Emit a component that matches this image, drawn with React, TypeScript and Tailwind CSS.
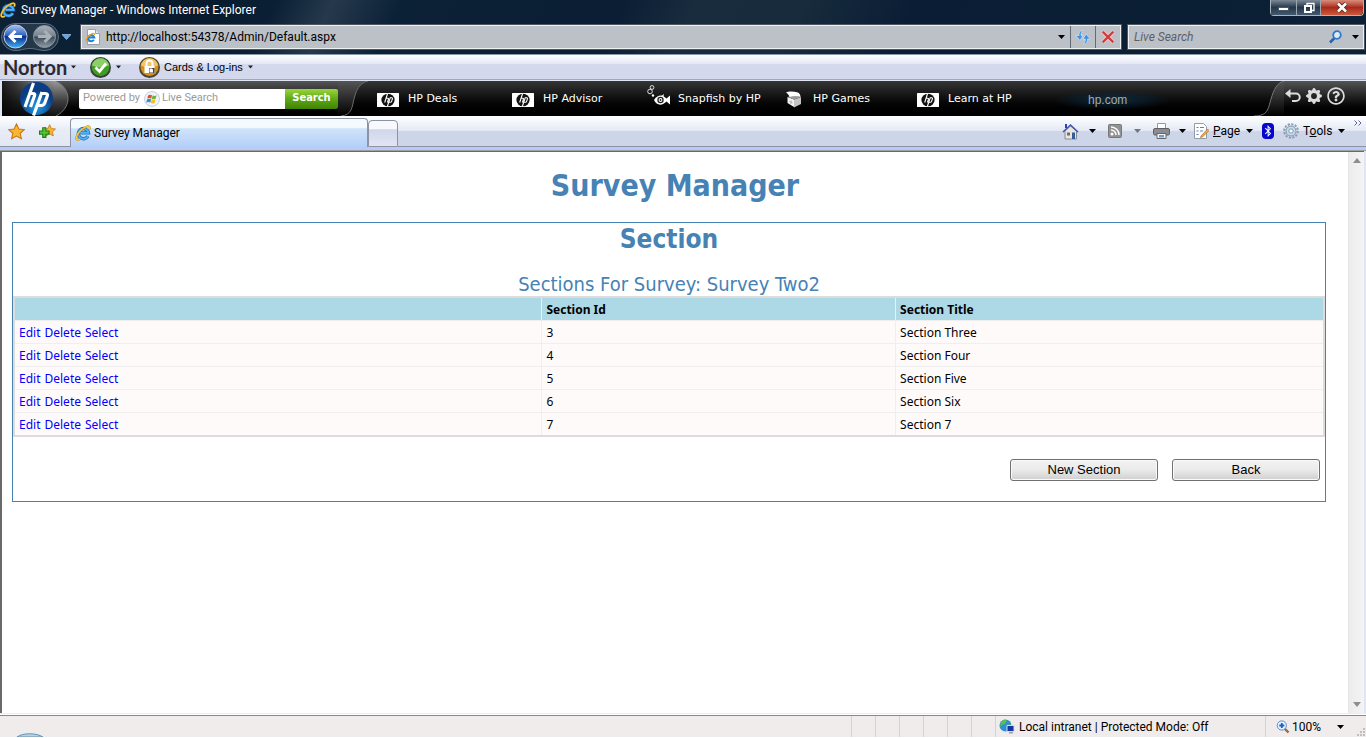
import React from 'react'
import { FaBluetoothB, FaRegQuestionCircle } from 'react-icons/fa'
import { BsGearFill } from 'react-icons/bs'

const ui = "font-['Roboto','Open_Sans',sans-serif]"

function Caret({ className = 'text-black' }: { className?: string }) {
  return (
    <svg className={`shrink-0 ${className}`} width="7" height="4" viewBox="0 0 7 4" aria-hidden="true">
      <path d="M0 0h7L3.5 4z" fill="currentColor" />
    </svg>
  )
}

function IeLogo({ size = 16 }: { size?: number }) {
  return (
    <svg className="shrink-0" width={size} height={size} viewBox="0 0 16 16" aria-hidden="true">
      <path d="M12.9 11.2a5.1 5.1 0 1 1 .6-3.3H5.4" fill="none" stroke="#1c6cc4" strokeWidth="3.4" />
      <path d="M12.9 11.2a5.1 5.1 0 1 1 .6-3.3H5.4" fill="none" stroke="#4fb5f2" strokeWidth="1.8" />
      <path d="M14.2 4.6C15.6 1.6 13.9 .5 11 1.8 6.5 3.7 2.3 8.6 1.3 12.3 .8 14.7 2.2 15.6 5 14.2" fill="none" stroke="#c98a12" strokeWidth="2" />
      <path d="M14.2 4.6C15.6 1.6 13.9 .5 11 1.8 6.5 3.7 2.3 8.6 1.3 12.3 .8 14.7 2.2 15.6 5 14.2" fill="none" stroke="#fbd04a" strokeWidth="1.2" />
    </svg>
  )
}

function PageIe() {
  return (
    <svg className="shrink-0" width="16" height="16" viewBox="0 0 16 16" aria-hidden="true">
      <path d="M2.5 .5h8l4 4v11h-12z" fill="#fdfdfd" stroke="#9aa0a8" />
      <path d="M10.5 .5v4h4" fill="#dfe5ee" stroke="#9aa0a8" />
      <path d="M8.9 10.8a3.1 3.1 0 1 1 .4-2.2H3.500" fill="none" stroke="#1f7fd8" strokeWidth="2" />
      <path d="M9.5 6C10 4 8 4 5.5 5.8 2.5 8 .7 10.7 1 12c.3 1 1.5 .8 2.8 .1" fill="none" stroke="#e9a51e" strokeWidth="1.2" />
    </svg>
  )
}

function NavButtons() {
  return (
    <svg className="shrink-0" width="60" height="30" viewBox="0 0 60 30" role="img" aria-label="Back and forward">
      <defs>
        <linearGradient id="nb" x2="0" y2="1">
          <stop offset="0" stopColor="#a9c2ee" /><stop offset=".45" stopColor="#2f62c0" />
          <stop offset=".5" stopColor="#0b2f8c" /><stop offset="1" stopColor="#3fb4f4" />
        </linearGradient>
        <linearGradient id="nf" x2="0" y2="1">
          <stop offset="0" stopColor="#aab3bd" /><stop offset=".48" stopColor="#77818d" />
          <stop offset=".52" stopColor="#3d4955" /><stop offset="1" stopColor="#8f9ca8" />
        </linearGradient>
      </defs>
      <path d="M15 1.5h30a13.500 13.500 0 0 1 0 27c-6 0-9-2-15-2s-9 2-15 2a13.500 13.500 0 0 1 0-27z" fill="#24384a" stroke="#5d6f80" />
      <circle cx="15.5" cy="14.5" r="11.5" fill="url(#nb)" stroke="#b9cdf0" />
      <path d="M22 14.5H11M15.5 9l-5.5 5.5 5.5 5.5" fill="none" stroke="#fff" strokeWidth="3" />
      <circle cx="44.5" cy="14.5" r="11" fill="url(#nf)" stroke="#8c98a4" />
      <path d="M38 14.5h11M44.5 9l5.5 5.5-5.5 5.5" fill="none" stroke="#a9b1b9" strokeWidth="3" />
    </svg>
  )
}

function WindowControls() {
  return (
    <div className="mr-[2px] flex h-4 rounded-b border border-t-0 border-[#aab4be]">
      <button type="button" aria-label="Minimize" className="flex w-[26px] items-center justify-center border-r border-[#9aa6b2] bg-linear-to-b from-[#7d8995] via-[#25384a] via-50% to-[#435a70]">
        <svg width="13" height="8" viewBox="0 0 13 8"><path d="M1.5 3.5h10v3h-10z" fill="#fff" stroke="#4a5866" /></svg>
      </button>
      <button type="button" aria-label="Restore" className="flex w-6 items-center justify-center border-r border-[#9aa6b2] bg-linear-to-b from-[#7d8995] via-[#25384a] via-50% to-[#435a70]">
        <svg width="12" height="12" viewBox="0 0 12 12"><path d="M4 3V1.5h7v7H9" fill="none" stroke="#fff" strokeWidth="1.3" /><path d="M2 4h6v6H2z" fill="none" stroke="#fff" strokeWidth="2" /></svg>
      </button>
      <button type="button" aria-label="Close" className="flex w-[42px] items-center justify-center rounded-br bg-linear-to-b from-[#d88c7c] via-[#a8281a] via-50% to-[#cc5a3a]">
        <svg width="12" height="11" viewBox="0 0 12 11"><path d="M2 1.500l8 8M10 1.500l-8 8" stroke="#5a2620" strokeWidth="4.2" /><path d="M2 1.500l8 8M10 1.500l-8 8" stroke="#fff" strokeWidth="2.6" /></svg>
      </button>
    </div>
  )
}

function AddressRow() {
  const box = 'flex h-6 items-center border border-[#f0f1f3] bg-[#bcc0c7] outline outline-1 outline-[#4d5660]'
  return (
    <div className="flex h-[35px] items-center">
      <div className="flex w-[81px] items-center gap-[2px]"><NavButtons />
        <button type="button" aria-label="Recent pages" className="flex">
          <svg width="9" height="6" viewBox="0 0 9 6"><path d="M0 .5h9L4.5 5.5z" fill="#5fa4e8" stroke="#b9d6f4" strokeWidth=".6" /></svg>
        </button>
      </div>
      <div className={`${box} min-w-0 flex-1`}>
        <div className="flex min-w-0 flex-1 items-center gap-[5px] pl-[3px]">
          <PageIe />
          <input aria-label="Address" defaultValue="http://localhost:54378/Admin/Default.aspx" className="min-w-0 flex-1 bg-transparent text-xs text-black outline-none" />
          <button type="button" aria-label="Address history" className="flex px-[5px]"><Caret /></button>
        </div>
        <button type="button" aria-label="Refresh" className="flex h-full w-[25px] items-center justify-center border-l border-[#626a73]">
          <svg width="16" height="16" viewBox="0 0 16 16">
            <path d="M8 1.500C4.5 1.500 4 4 4 6.500H.8L5 11.500 8 6.500H6C6 4.500 6.500 3 8 1.500zM8.500 15c3.500 0 4-2.500 4-5h2.700L11 5 8 10h2.300c0 2-.3 3.500-1.800 5z" fill="#3f92e4" stroke="#e4eefa" strokeWidth=".6" />
          </svg>
        </button>
        <button type="button" aria-label="Stop" className="flex h-full w-[25px] items-center justify-center border-l border-[#626a73]">
          <svg width="14" height="14" viewBox="0 0 12 12"><path d="M1.500 1.500l9 9M10.500 1.500l-9 9" stroke="#f2c6c6" strokeWidth="3.400" /><path d="M1.500 1.500l9 9M10.500 1.500l-9 9" stroke="#cf3a3c" strokeWidth="2" /></svg>
        </button>
      </div>
      <div className={`${box} mr-[2px] ml-[7px] w-[236px] pr-1 pl-[5px]`}>
        <input aria-label="Live Search" placeholder="Live Search" className="min-w-0 flex-1 bg-transparent text-xs italic outline-none placeholder:text-[#5c6168]" />
        <button type="button" aria-label="Search" className="flex">
          <svg width="15" height="14" viewBox="0 0 15 14"><path d="M6.5 8L2 12.5" stroke="#2b5fb0" strokeWidth="2.5" /><circle cx="9" cy="5" r="3.8" fill="#dcebfa" stroke="#2f78cc" strokeWidth="1.8" /></svg>
        </button>
        <button type="button" aria-label="Search options" className="ml-[9px] flex"><Caret /></button>
      </div>
    </div>
  )
}

function NortonBar() {
  return (
    <div className="flex h-[25px] items-center border-b border-[#a5a8b4] bg-linear-to-b from-[#fcfdff] from-0% via-[#e6eaf6] via-35% to-[#d3d8ec] to-40%">
      <button type="button" className="flex w-[89px] items-center gap-1 pl-[3px]">
        <span className="font-['Lato',sans-serif] text-[20px] leading-5 font-bold text-[#2c2a2e]">Norton</span>
        <Caret className="w-[5px] text-[#222]" />
      </button>
      <button type="button" aria-label="Norton status" className="flex w-[49px] items-center gap-1">
        <svg width="23" height="23" viewBox="0 0 23 23">
          <circle cx="11.5" cy="11.5" r="10.5" fill="#3c3f3c" /><circle cx="11.5" cy="11" r="9" fill="#3f9e22" />
          <path d="M3 9.500a8.600 8.600 0 0 1 17 0c-5 2.500-12 2.500-17 0z" fill="#8ccf69" />
          <path d="M6.500 11.500l4 4 6.500-8" fill="none" stroke="#fff" strokeWidth="2.8" />
        </svg>
        <Caret className="w-[5px] text-[#222]" />
      </button>
      <button type="button" className="flex items-center gap-[3px] font-['Liberation_Sans',Arial,sans-serif] text-[11px] text-black">
        <svg width="23" height="23" viewBox="0 0 23 23">
          <circle cx="11.5" cy="11.5" r="10.5" fill="#4b4438" /><circle cx="11.5" cy="11" r="9" fill="#d98f12" />
          <path d="M3 9.500a8.600 8.600 0 0 1 17 0c-5 2.500-12 2.500-17 0z" fill="#f2c469" />
          <path d="M8.500 10V7.500a3 3 0 0 1 6 0V10" fill="none" stroke="#fff" strokeWidth="2" />
          <path d="M6.500 10h10v7h-10z" fill="#fff" /><path d="M11 12h5.500v5H11z" fill="#4a4438" /><path d="M11.500 12.500h2.500l1 1v3h-3.500z" fill="#fff" />
        </svg>
        Cards &amp; Log-ins <Caret className="ml-[2px] w-[5px] text-[#222]" />
      </button>
    </div>
  )
}

function HpTile() {
  return (
    <svg width="22" height="14" viewBox="0 0 22 14" aria-hidden="true">
      <rect width="22" height="14" rx=".5" fill="#fff" /><ellipse cx="11" cy="7" rx="6.600" ry="6.300" fill="#111" />
      <path d="M10.600 .5L7.700 9.500M9 5.300h1.800c.7 0 .8.400.6 1L10.400 9.500M13.200 4.800L10.300 13.500M12.800 4.800h1.900c.8 0 .9.500.7 1.100l-.8 2.500c-.2.600-.5.900-1.200.9h-1.600" fill="none" stroke="#fff" strokeWidth="1.100" />
    </svg>
  )
}

function Fish() {
  return (
    <svg className="-mt-[9px]" width="24" height="21" viewBox="0 0 24 21" aria-hidden="true">
      <circle cx="5" cy="2.5" r="1.9" fill="none" stroke="#ddd" /><circle cx="3" cy="6.5" r="2.3" fill="none" stroke="#ddd" /><circle cx="6" cy="10.5" r="1.2" fill="#fff" />
      <path d="M7 15c2-3.500 5-5 8-4.500l2-1.500-.5 2.200 3 2.300 3.500-3v9l-3.500-3c-4 4.500-10 4.300-12.500-1.500z" fill="#fff" />
      <circle cx="13.5" cy="15" r="3.2" fill="#222" /><circle cx="13.5" cy="15" r="1.9" fill="#fff" /><circle cx="13.5" cy="15" r=".9" fill="#222" />
    </svg>
  )
}

function Cube() {
  return (
    <svg className="ml-1" width="16" height="17" viewBox="0 0 16 17" aria-hidden="true">
      <path d="M1.500 6l6.500 2.500V16l-6.500-4z" fill="#f2f2f2" /><path d="M8 8.500L15 6v7l-7 3.500z" fill="#c4c4c4" />
      <path d="M1.500 6L8 4l7 2-7 2.500z" fill="#9c9c9c" />
      <path d="M0 1.500C3 0 8 .5 12 1.500c1.500.5 2.500 2.500 2.500 4.500-4-1.500-8-1-11 0C3 4 1.500 2.500 0 1.500z" fill="#fff" />
      <path d="M5 9.500v3.500M3.500 10.500l3 1.200" stroke="#aaa" strokeWidth=".9" />
    </svg>
  )
}

const hpLinks = [
  { label: 'HP Deals', icon: <HpTile /> },
  { label: 'HP Advisor', icon: <HpTile /> },
  { label: 'Snapfish by HP', icon: <Fish /> },
  { label: 'HP Games', icon: <Cube /> },
  { label: 'Learn at HP', icon: <HpTile /> },
]

function HpBar() {
  return (
    <div className="mt-px ml-[2px] flex h-[35px] items-center bg-linear-to-b from-[#363636] to-black font-['DejaVu_Sans',Verdana,sans-serif]">
      <div className="flex h-full shrink-0 items-center bg-linear-to-b from-[#555] to-black">
        <svg className="shrink-0" width="68" height="35" viewBox="0 0 68 35" role="img" aria-label="HP">
          <defs>
            <linearGradient id="pill" x2="0" y2="1"><stop offset="0" stopColor="#999" /><stop offset=".6" stopColor="#3a3a3a" /><stop offset="1" stopColor="#111" /></linearGradient>
            <linearGradient id="pillFade"><stop offset="0" stopColor="#000" stopOpacity=".8" /><stop offset=".8" stopColor="#000" stopOpacity="0" /></linearGradient>
            <radialGradient id="hpBlue" cy=".75"><stop offset="0" stopColor="#1fa0e8" /><stop offset="1" stopColor="#0b3d86" /></radialGradient>
          </defs>
          <path d="M0 0h54c8 4 12 11 12 17.500S62 31 54 35H0z" fill="url(#pill)" />
          <path d="M0 0h54c8 4 12 11 12 17.500S62 31 54 35H0z" fill="url(#pillFade)" />
          <path d="M54 0c8 4 12 11 12 17.500S62 31 54 35" fill="none" stroke="#777" />
          <circle cx="34.5" cy="17.5" r="16.5" fill="url(#hpBlue)" />
          <path d="M31.500 2L23 26M26.500 12.500h4.500c1.600 0 2 .9 1.500 2.300L28.500 26M40 11L31.500 34.500M38.500 12.500h5c1.900 0 2.300 1 1.700 2.700l-2.400 6.600c-.6 1.700-1.500 2.700-3.400 2.700h-4.400" fill="none" stroke="#fff" strokeWidth="3.200" />
        </svg>
        <form className="ml-[9px] flex h-5" onSubmit={(e) => e.preventDefault()}>
          <label className={`flex w-[206px] items-center gap-[2px] rounded-l-xs bg-white pl-1 text-[11px] text-[#9a9a9a] ${ui}`}>
            <span className="whitespace-nowrap">Powered by</span>
            <svg className="ml-[2px] shrink-0" width="16" height="16" viewBox="0 0 16 16" aria-hidden="true">
              <circle cx="8" cy="8" r="7.5" fill="#eef3f8" stroke="#c3cfda" />
              <path d="M4 4.500c1.500-1 2.500-1 4-.2L7.300 7.500c-1.500-.8-2.500-.8-4 0z" fill="#e8502a" /><path d="M8.600 4.500c1.400.7 2.600.6 4-.2l-1 3.400c-1.300.7-2.500.8-3.800 0z" fill="#6cb33e" />
              <path d="M3.100 8.300c1.500-.8 2.600-.8 4 0l-.8 3.200c-1.500-.8-2.600-.7-4 0z" fill="#3a86d8" /><path d="M7.700 8.600c1.300.7 2.500.6 3.800 0l-.9 3.300c-1.400.7-2.500.7-3.800-.1z" fill="#f6bd25" />
            </svg>
            <input aria-label="Search the web" placeholder="Live Search" className="min-w-0 flex-1 outline-none placeholder:text-[#9a9a9a]" />
          </label>
          <button type="submit" className="w-[53px] rounded-r-xs bg-linear-to-b from-[#9ad63a] via-[#5fa814] via-50% to-[#3f8204] font-['DejaVu_Sans_Condensed','Liberation_Sans',sans-serif] text-[11px] font-bold text-white">Search</button>
        </form>
      </div>
      <svg className="shrink-0" width="30" height="35" viewBox="0 0 30 35" aria-hidden="true">
        <defs><linearGradient id="swoosh" x2="0" y2="1"><stop offset="0" stopColor="#555" /><stop offset="1" stopColor="#000" /></linearGradient></defs>
        <path d="M0 35h3C14 34 14 26 16 18S21 2 30 0H0z" fill="url(#swoosh)" />
        <path d="M3 35C14 34 14 26 16 18S21 2 30 0" fill="none" stroke="#6a6a6a" />
      </svg>
      <nav className="flex min-w-0 flex-1 pt-[2px] pl-[9px]">
        {hpLinks.map((l) => (
          <a key={l.label} href="#" className="flex w-[135px] items-center whitespace-nowrap text-[11px] text-white">
            <span className="flex h-5 w-[31px] items-center">{l.icon}</span>{l.label}
          </a>
        ))}
        <a href="#" className="flex w-[120px] items-center bg-radial from-[#0a2a40] to-transparent to-70% pl-9 font-['Liberation_Sans',Arial,sans-serif] text-xs text-[#a5a9ad]">hp.com</a>
      </nav>
      <div className="flex h-full shrink-0 items-center">
        <svg className="shrink-0" width="30" height="35" viewBox="0 0 30 35" aria-hidden="true">
          <path d="M0 35C14 35 14 28 17 18S23 2 30 0V35z" fill="url(#swoosh)" />
          <path d="M0 35C14 35 14 28 17 18S23 2 30 0" fill="none" stroke="#777" />
        </svg>
        <div className="flex h-full w-[82px] items-center gap-[5px] bg-linear-to-b from-[#555] to-black pb-[6px] pl-px text-[#dcdcdc]">
          <svg width="16" height="14" viewBox="0 0 16 14" role="img" aria-label="Undo"><path d="M3 4.500h8a3.700 3.700 0 0 1 0 7.500H7" fill="none" stroke="currentColor" strokeWidth="2" /><path d="M0 4.500L5.500 0v9z" fill="currentColor" /></svg>
          <BsGearFill size={16} aria-label="Settings" />
          <FaRegQuestionCircle size={18} aria-label="Help" />
        </div>
      </div>
    </div>
  )
}

function Star() {
  return <path d="M8 .8l2.200 4.800 5.200.6-3.900 3.500 1.100 5.200L8 12.300l-4.600 2.600 1.100-5.200L.6 6.200l5.200-.6z" fill="#f9b62c" stroke="#c6761a" />
}

function TabBar() {
  return (
    <div className={`flex h-[31px] items-end bg-linear-to-b from-white via-[#e7ecf6] via-45% to-[#e2e7f4] text-xs text-black ${ui}`}>
      <div className="flex h-full w-[70px] items-center gap-[14px] border-b border-[#8b93a5] pl-2">
        <button type="button" aria-label="Favorites" className="flex"><svg width="17" height="17" viewBox="0 0 16 16"><Star /></svg></button>
        <button type="button" aria-label="Add to favorites" className="flex"><svg width="17" height="17" viewBox="0 0 16 16"><g transform="translate(4 1) scale(.75)"><Star /></g><path d="M3.500 4.500h3v3h3v3h-3v3h-3v-3h-3v-3h3z" fill="#52c234" stroke="#1f7a1a" /></svg></button>
      </div>
      <div className="flex h-[29px] w-[298px] items-center gap-[3px] rounded-t border border-b-0 border-[#8b93a5] bg-linear-to-b from-[#f4fafe] from-30% via-[#cfe4fb] via-35% to-[#b5cff8] pl-1">
        <IeLogo /> Survey Manager
      </div>
      <button type="button" aria-label="New tab" className="h-[27px] w-[30px] rounded-t border border-[#8b93a5] bg-linear-to-b from-[#f7f9fd] from-30% via-[#cfd7ea] via-35% to-[#e3e5f3]" />
      <div className="flex h-full min-w-0 flex-1 items-center justify-end border-b border-[#8b93a5] bg-linear-to-b from-white from-0% via-[#e4e9f5] via-48% to-[#cdd5e9] to-52%">
        <button type="button" aria-label="Home" className="flex w-[46px] items-center gap-[10px]">
          <svg width="17" height="17" viewBox="0 0 17 17"><path d="M3 8v8h11.500V8L8.500 3z" fill="#e9e6de" stroke="#8a8a92" /><path d="M1 9l7.500-7L16 9" fill="none" stroke="#3f56b8" strokeWidth="1.6" /><path d="M3 1h2v4H3z" fill="#2d44b0" /><path d="M10 9.500h3V16h-3z" fill="#2f5f9a" /><path d="M5 9.500h3v3H5z" fill="#666e78" /></svg>
          <Caret />
        </button>
        <button type="button" aria-label="Feeds" className="flex w-[45px] items-center gap-3">
          <svg width="14" height="14" viewBox="0 0 14 14"><rect x=".5" y=".5" width="13" height="13" rx="1" fill="#929292" stroke="#787878" /><circle cx="4" cy="10" r="1.5" fill="#fff" /><path d="M3 6a5 5 0 0 1 5 5M3 3a8 8 0 0 1 8 8" fill="none" stroke="#fff" strokeWidth="1.5" /></svg>
          <Caret className="text-[#777]" />
        </button>
        <button type="button" aria-label="Print" className="flex w-10 items-center gap-[9px]">
          <svg width="17" height="16" viewBox="0 0 17 16"><path d="M4.500 .5h8V6h-8z" fill="#fff" stroke="#999" /><rect x=".5" y="5.5" width="16" height="6.5" rx="1.5" fill="#8a8c90" stroke="#5e6064" /><path d="M4 10.500h9v5H4z" fill="#f4f4f4" stroke="#666" /><path d="M6 12h5v2.500H6z" fill="#5aa5dc" /></svg>
          <Caret />
        </button>
        <button type="button" className="flex w-[69px] items-center gap-1">
          <svg width="16" height="16" viewBox="0 0 16 16"><path d="M1.500 .5h9l3 3v12h-12z" fill="#fff" stroke="#9a9aa2" /><path d="M3.500 4.500h2m1.500 0h4M3.500 8h2m1.500 0h3M3.500 11.500h2" stroke="#4a86c8" /><path d="M8 13l6.500-7L16 7.500 9.500 14l-2 .5z" fill="#f0b24a" stroke="#a8682a" strokeWidth=".7" /></svg>
          <span><u>P</u>age</span><Caret className="ml-[2px]" />
        </button>
        <button type="button" aria-label="Bluetooth" className="mr-[9px] flex h-4 w-3 items-center justify-center rounded bg-[#0606cf] text-white"><FaBluetoothB size={12} /></button>
        <button type="button" className="flex w-[71px] items-center gap-1">
          <svg width="16" height="16" viewBox="0 0 16 16"><circle cx="8" cy="8" r="6.8" fill="none" stroke="#8c9cb0" strokeWidth="2" strokeDasharray="2.2 1.36" /><circle cx="8" cy="8" r="5" fill="#c6dceb" stroke="#8098b0" /><circle cx="8" cy="8" r="2.2" fill="#f4f8fc" stroke="#8098b0" /></svg>
          <span>T<u>o</u>ols</span><Caret className="ml-[2px]" />
        </button>
        <svg className="mr-1 mb-4" width="8" height="6" viewBox="0 0 8 6" aria-hidden="true"><path d="M.5 .5L3 3 .5 5.500M4.500 .5L7 3 4.500 5.500" fill="none" stroke="#5a62a8" /></svg>
      </div>
    </div>
  )
}

const rows = [
  { id: 3, title: 'Section Three' },
  { id: 4, title: 'Section Four' },
  { id: 5, title: 'Section Five' },
  { id: 6, title: 'Section Six' },
  { id: 7, title: 'Section 7' },
]

function FormButton({ children }: { children: React.ReactNode }) {
  return (
    <button type="button" className="h-[22px] w-[148px] rounded-[3px] border border-[#707070] bg-linear-to-b from-[#f2f2f2] from-0% via-[#ebebeb] via-49% to-[#cfcfcf] font-['Liberation_Sans',Arial,sans-serif] text-[13px] leading-5 text-black inset-shadow-[0_0_0_1px_#fafafa]">{children}</button>
  )
}

const heading = "text-center font-['DejaVu_Sans_Condensed',Tahoma,sans-serif] text-[#4682b4]"

function SurveyPage() {
  return (
    <main className="min-w-0 flex-1 pr-[22px] pl-[10px] font-['Noto_Sans',Tahoma,sans-serif] text-xs text-black">
      <h1 className={`${heading} -mr-3 pt-[14px] text-[30px] leading-10 font-bold`}>Survey Manager</h1>
      <section className="mt-4 border border-[#4682b4] pb-5">
        <h2 className={`${heading} text-[26px] leading-8 font-bold`}>Section</h2>
        <h3 className={`${heading} mt-[17px] text-xl leading-6`}>Sections For Survey: Survey Two2</h3>
        <table className="w-full table-fixed border-collapse border-2 border-[#dcdcdc] bg-[#fffafa]">
          <colgroup><col className="w-[40.3%]" /><col className="w-[27%]" /><col /></colgroup>
          <thead>
            <tr className="h-[23px] bg-[#add8e6] text-left">
              <th aria-label="Actions" className="border-r border-b border-[#eee]" />
              <th className="border-r border-b border-[#eee] px-1 pt-[2px]">Section Id</th>
              <th className="border-b border-[#eee] px-1 pt-[2px]">Section Title</th>
            </tr>
          </thead>
          <tbody>
            {rows.map((r) => (
              <tr key={r.id} className="h-[23px] last:h-6">
                <td className="border-r border-b border-[#efefef] px-1 pt-[2px]">
                  <span className="flex gap-1 text-[#0000ff]"><a href="#">Edit</a><a href="#">Delete</a><a href="#">Select</a></span>
                </td>
                <td className="border-r border-b border-[#efefef] px-1 pt-[2px]">{r.id}</td>
                <td className="border-b border-[#efefef] px-1 pt-[2px]">{r.title}</td>
              </tr>
            ))}
          </tbody>
        </table>
        <div className="mt-[22px] flex justify-end gap-[14px] pr-[5px]">
          <FormButton>New Section</FormButton>
          <FormButton>Back</FormButton>
        </div>
      </section>
    </main>
  )
}

function ScrollTrack() {
  return (
    <div className="flex w-4 shrink-0 flex-col items-center justify-between border-l border-[#e6e6e6] bg-linear-to-r from-[#ececec] to-[#f4f4f4] py-[6px]">
      <svg width="8" height="5" viewBox="0 0 8 5" aria-hidden="true"><path d="M0 5h8L4 0z" fill="#8e8e8e" /></svg>
      <svg width="8" height="5" viewBox="0 0 8 5" aria-hidden="true"><path d="M0 0h8L4 5z" fill="#8e8e8e" /></svg>
    </div>
  )
}

function StatusBar() {
  return (
    <footer className={`flex h-[22px] items-stretch border-b border-white bg-[#f0eceb] text-xs text-black ${ui}`}>
      <div className="flex min-w-0 flex-1 items-end pl-4">
        <svg width="28" height="4" viewBox="0 0 28 4" aria-hidden="true"><path d="M1 4C7-.3 20-.3 27 4z" fill="#b9d2e2" stroke="#5f93b8" /></svg>
      </div>
      {[0, 1, 2, 3, 4, 5].map((n) => <div key={n} className="w-6 border-l border-[#d6d2d1]" />)}
      <div className="flex w-[270px] items-center gap-1 border-l border-[#d6d2d1] pl-[3px]">
        <svg width="16" height="16" viewBox="0 0 16 16" aria-hidden="true"><circle cx="6.5" cy="6.5" r="6" fill="#2f8fd4" /><path d="M2 3c2-3 5-2.500 6-1.500L6 5 3 6 1 8zM8 6l4-1-1 4H8z" fill="#5bbf4a" /><path d="M8 6.500h7v6H8z" fill="#1733a8" stroke="#d4dcec" /><path d="M10 13h4v1.500h-4z" fill="#9aa2b0" /></svg>
        Local intranet | Protected Mode: Off
      </div>
      <div className="flex w-[101px] items-center border-l border-[#d6d2d1] pl-[10px]">
        <button type="button" className="flex items-center gap-[2px]">
          <svg width="14" height="14" viewBox="0 0 14 14" aria-hidden="true"><path d="M8.500 8.500l4 4" stroke="#9a6a3a" strokeWidth="2.4" /><circle cx="5.8" cy="5.5" r="4.6" fill="#e6f2fd" stroke="#5b8fc8" /><path d="M5.800 3v5M3.300 5.500h5" stroke="#1d5fc4" strokeWidth="1.8" /></svg>
          100%
          <Caret className="ml-[14px]" />
        </button>
        <svg className="mt-auto ml-auto" width="10" height="10" viewBox="0 0 10 10" aria-hidden="true"><path d="M7 1h2v2H7zM4 4h2v2H4zM7 4h2v2H7zM1 7h2v2H1zM4 7h2v2H4zM7 7h2v2H7z" fill="#c2bebd" /></svg>
      </div>
    </footer>
  )
}

export default function App() {
  return (
    <div className="flex min-h-screen flex-col bg-[#dfe5f3]">
      <header>
        <div className={`border-b border-[#8c98a8] bg-[#0c2034] bg-[linear-gradient(115deg,#0e2134_0%,#0c2034_8%,#081a2c_14%,#0b2035_20%,#26394c_24%,#0b2136_29%,#0b1e34_45%,#182c3e_50%,#172b3c_58%,#0a1d35_66%,#0c2134_100%)] ${ui}`}>
          <div className="flex h-[19px] items-start justify-between">
            <div className="flex h-[19px] items-center gap-[5px] text-xs text-white"><IeLogo /><span>Survey Manager - Windows Internet Explorer</span></div>
            <WindowControls />
          </div>
          <AddressRow />
        </div>
        <NortonBar />
        <HpBar />
        <TabBar />
        <div className="h-1 border-b border-[#a0a0a0] bg-[#b8cbf6]" />
      </header>
      <div className="mr-[2px] flex flex-1 border-t border-l-2 border-[#696969] bg-white">
        <SurveyPage />
        <ScrollTrack />
      </div>
      <div className="h-[3px] border-y border-t-[#eee] border-b-[#868a8a] bg-white" />
      <StatusBar />
    </div>
  )
}
